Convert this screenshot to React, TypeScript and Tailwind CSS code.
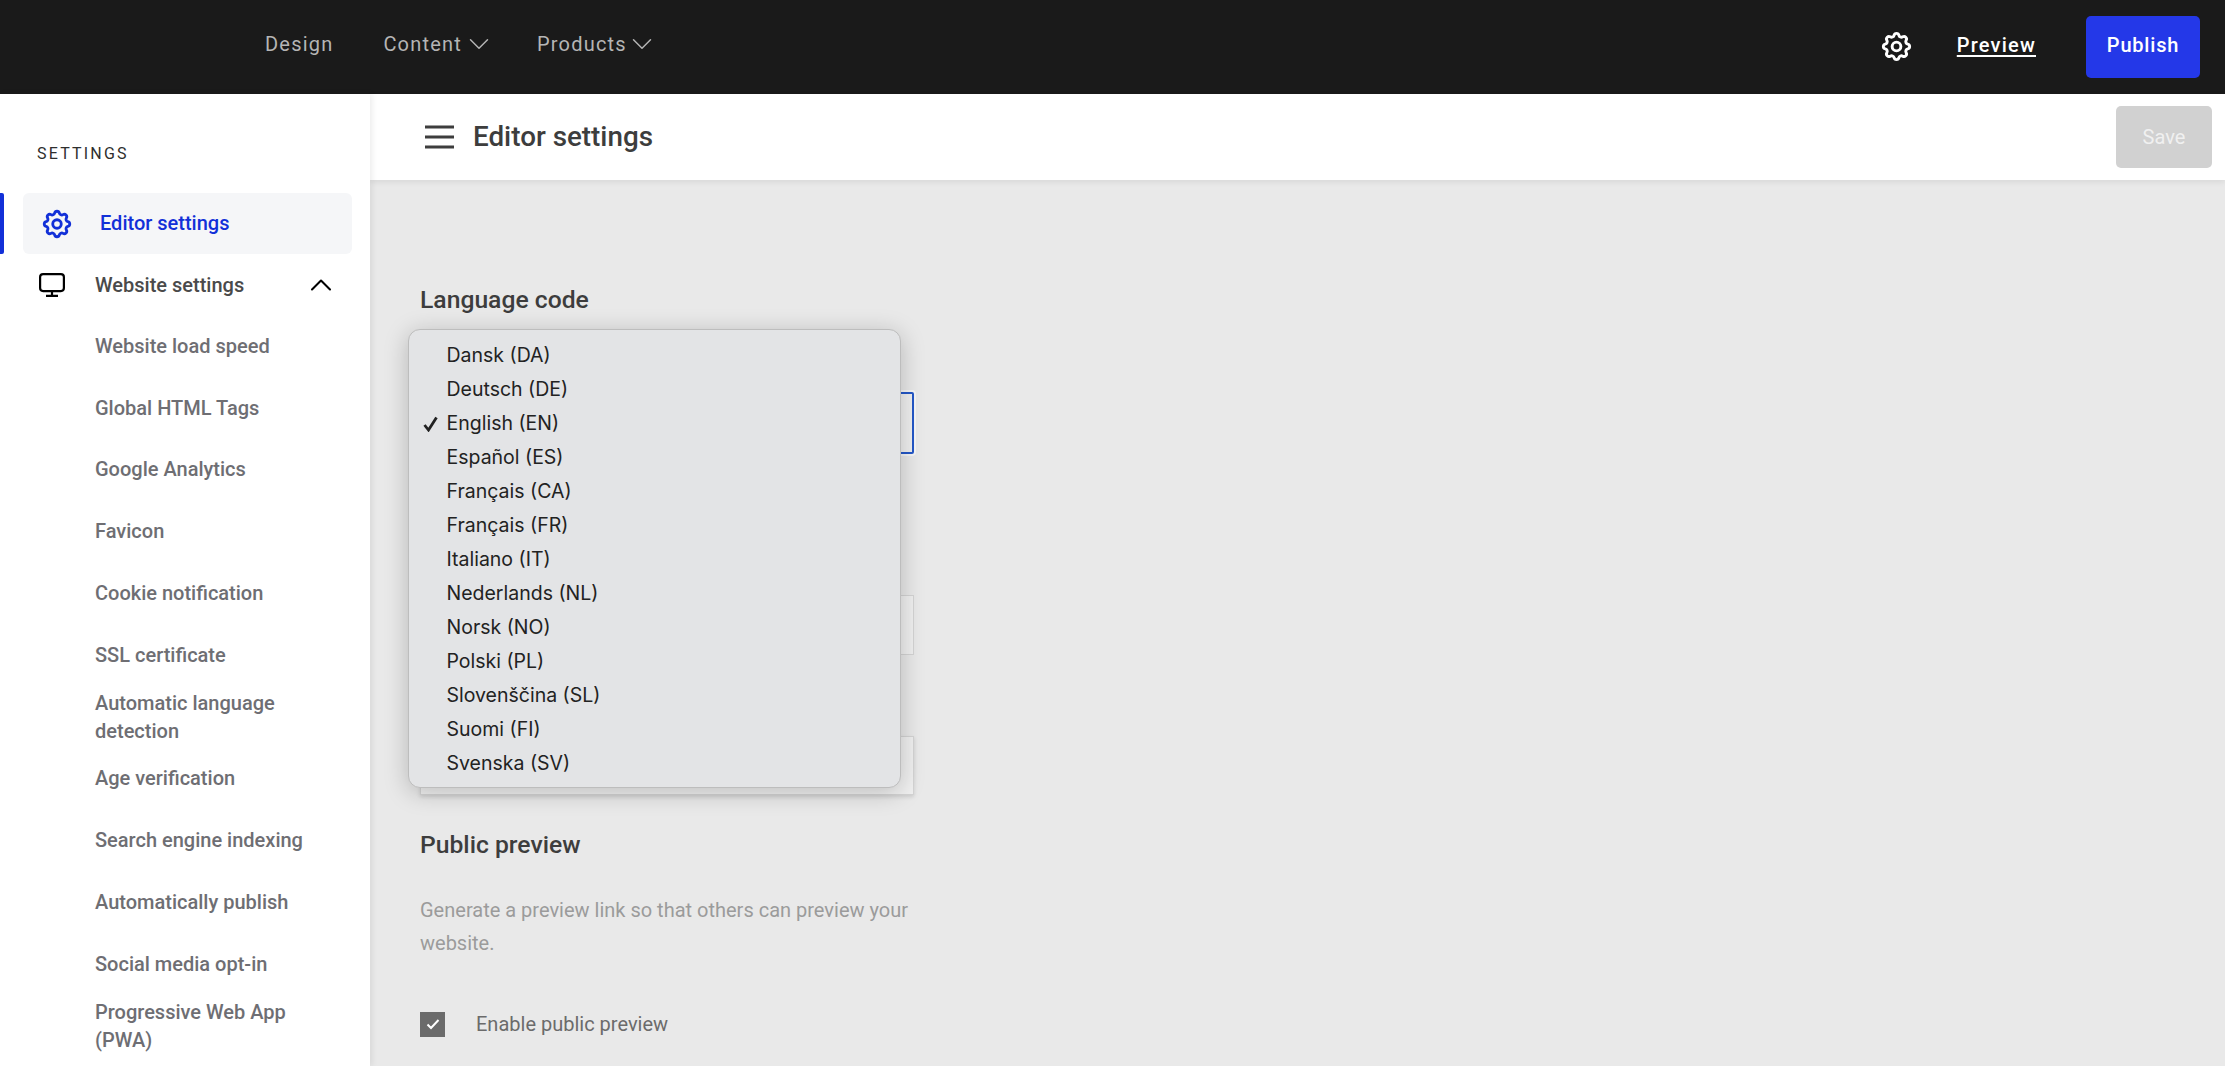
import { HiOutlineCog } from 'react-icons/hi';
import { ChevronDown, ChevronUp } from 'lucide-react';

const subItems = [
  'Website load speed',
  'Global HTML Tags',
  'Google Analytics',
  'Favicon',
  'Cookie notification',
  'SSL certificate',
  'Automatic language detection',
  'Age verification',
  'Search engine indexing',
  'Automatically publish',
  'Social media opt-in',
  'Progressive Web App (PWA)',
];

const languages = [
  'Dansk (DA)',
  'Deutsch (DE)',
  'English (EN)',
  'Español (ES)',
  'Français (CA)',
  'Français (FR)',
  'Italiano (IT)',
  'Nederlands (NL)',
  'Norsk (NO)',
  'Polski (PL)',
  'Slovenščina (SL)',
  'Suomi (FI)',
  'Svenska (SV)',
];

export default function App() {
  return (
    <div className="flex h-screen flex-col overflow-hidden bg-white font-['Roboto',sans-serif]">
      {/* Top bar */}
      <header className="flex h-[94px] shrink-0 items-center bg-[#1a1a1a] pb-[6px] pl-[265px] pr-[25px] text-[#b5b5b5]">
        <nav className="flex items-center text-[20px] tracking-[1.2px]">
          <span>Design</span>
          <span className="ml-[50px]">Content</span>
          <ChevronDown className="ml-[0px]" size={34} strokeWidth={1.05} />
          <span className="ml-[41px]">Products</span>
          <ChevronDown className="ml-[-2px]" size={34} strokeWidth={1.05} />
        </nav>
        <div className="ml-auto flex items-center text-white">
          <HiOutlineCog className="mt-[4px] text-[35px]" />
          <span className="ml-[43px] mt-[2px] text-[20px] font-medium leading-[24px] tracking-[1.2px] underline underline-offset-[3px]">
            Preview
          </span>
          <button className="ml-[50px] mt-[6px] h-[62px] w-[114px] rounded-[5px] bg-[#2438e8] pb-[5px] text-center text-[20px] font-medium tracking-[0.8px]">
            Publish
          </button>
        </div>
      </header>

      <div className="flex min-h-0 flex-1">
        {/* Sidebar */}
        <aside className="z-10 w-[370px] shrink-0 bg-white shadow-[2px_0_6px_rgba(0,0,0,0.08)]">
          <div className="pl-[37px] pt-[50px] text-[16px] leading-[20px] tracking-[2.2px] text-[#2e2e2e]">
            SETTINGS
          </div>
          <div className="relative mt-[29px] pl-[23px] pr-[18px]">
            <div className="absolute left-0 top-0 h-[61px] w-[4px] rounded-r-[2px] bg-[#1230d8]" />
            <div className="flex h-[61px] items-center rounded-[6px] bg-[#f5f6f8] pl-[17px] text-[#1230d8]">
              <HiOutlineCog className="text-[34px]" />
              <span className="ml-[26px] pb-[2px] text-[20px] font-medium">Editor settings</span>
            </div>
          </div>
          <div className="flex h-[61px] items-center pl-[39px] pr-[31px] text-[#4a4a4a]">
            <svg width="26" height="24" viewBox="0 0 26 24" className="text-black">
              <rect x="1.1" y="1.1" width="23.8" height="17" rx="3" stroke="currentColor" strokeWidth="2.2" fill="none" />
              <path d="M13 18v5M7 22.9h12" stroke="currentColor" strokeWidth="2.2" fill="none" />
            </svg>
            <span className="ml-[30px] text-[20px] font-medium">Website settings</span>
            <ChevronUp className="ml-auto text-black" size={36} strokeWidth={1.4} />
          </div>
          {subItems.map((item) => (
            <div
              key={item}
              className="flex h-[61.8px] items-center pl-[95px] pr-[30px] text-[20px] font-medium leading-[28px] text-[#6e6e73]"
            >
              <span>{item}</span>
            </div>
          ))}
        </aside>

        <main className="flex min-w-0 flex-1 flex-col bg-[#e9e9e9]">
          {/* Title bar */}
          <div className="z-[5] flex h-[86px] shrink-0 items-center bg-white pl-[55px] pr-[13px] shadow-[0_2px_6px_rgba(0,0,0,0.08)]">
            <svg width="30" height="24" viewBox="0 0 30 24" className="text-[#3d3d3d]">
              <path d="M0 2h29M0 12h29M0 22h29" stroke="currentColor" strokeWidth="3" fill="none" />
            </svg>
            <h1 className="ml-[18px] text-[27.8px] font-medium text-[#3d3d3d]">Editor settings</h1>
            <button className="ml-auto h-[62px] w-[96px] rounded-[5px] bg-[#d1d1d1] text-[20px] text-[#f0f0f0]">
              Save
            </button>
          </div>

          {/* Form */}
          <div className="relative ml-[50px] w-[494px] pt-[105px]">
            <h2 className="text-[24.7px] font-medium leading-[30px] text-[#3d3d3d]">Language code</h2>
            <div className="mt-[77px] h-[62px] rounded-[2px] border-2 border-[#2458c8] bg-[#f0f0f0] shadow-[0_0_0_2px_#f6f6f6]" />
            <div className="mt-[141px] h-[60px] border border-[#d4d4d4] bg-[#f0f0f0]" />
            <div className="mt-[81px] h-[59px] border border-[#d4d4d4] bg-[#f0f0f0] shadow-[0_2px_4px_rgba(0,0,0,0.12)]" />
            <h2 className="mt-[35px] text-[24.7px] font-medium leading-[30px] text-[#3d3d3d]">Public preview</h2>
            <p className="mt-[34px] text-[20px] leading-[33px] text-[#9b9b9b]">
              Generate a preview link so that others can preview your website.
            </p>
            <label className="mt-[49px] flex items-center">
              <span className="flex h-[25px] w-[25px] items-center justify-center bg-[#6b6b6b]">
                <svg width="14" height="12" viewBox="0 0 14 12">
                  <path d="M1.5 6.5l3.5 3.5 7.5-8" stroke="#fff" strokeWidth="2" fill="none" />
                </svg>
              </span>
              <span className="ml-[31px] text-[20px] text-[#6b6b6b]">Enable public preview</span>
            </label>

            {/* Open language select */}
            <div className="absolute left-[-12px] top-[149px] h-[459px] w-[493px] rounded-[12px] border border-[#bdbdbd] bg-[#e3e4e6] py-[9px] font-['Inter',sans-serif] shadow-[0_4px_24px_rgba(0,0,0,0.22)]">
              {languages.map((lang) => (
                <div key={lang} className="relative flex h-[34px] items-center pl-[37.5px] text-[19.5px] text-[#222222]">
                  {lang === 'English (EN)' && (
                    <svg className="absolute left-[14px] top-[9px]" width="15" height="16" viewBox="0 0 15 16">
                      <path d="M1.5 9l4 5 8-12.5" stroke="#222222" strokeWidth="2.8" fill="none" />
                    </svg>
                  )}
                  {lang}
                </div>
              ))}
            </div>
          </div>
        </main>
      </div>
    </div>
  );
}
